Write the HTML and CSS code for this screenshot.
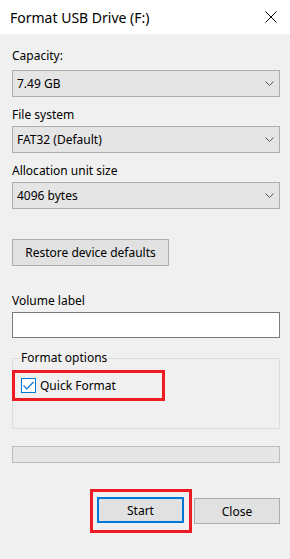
FILE: index.html
```html
<!DOCTYPE html>
<html lang="en">
<head>
    <meta charset="UTF-8">
    <meta name="viewport" content="width=device-width, initial-scale=1.0">
    <title>Format USB Drive (F:)</title>
    <link rel="stylesheet" href="styles.css">
</head>
<body>

    <!-- Title bar -->
    <header class="titlebar">
        <span class="title">Format USB Drive (F:)</span>
        <svg class="close-icon" width="12" height="12" viewBox="0 0 12 12">
            <path d="M0.5 0.5 L11.5 11.5 M11.5 0.5 L0.5 11.5" stroke="#000" stroke-width="1" fill="none"/>
        </svg>
    </header>

    <!-- Dialog body -->
    <main class="dialog">
        <label class="field-label first">Capacity:</label>
        <div class="select first-select">
            <span>7.49 GB</span>
            <svg class="chevron" width="9" height="5" viewBox="0 0 9 5"><path d="M0.5 0.5 L4.5 4.5 L8.5 0.5" stroke="#555" fill="none"/></svg>
        </div>

        <label class="field-label">File system</label>
        <div class="select">
            <span>FAT32 (Default)</span>
            <svg class="chevron" width="9" height="5" viewBox="0 0 9 5"><path d="M0.5 0.5 L4.5 4.5 L8.5 0.5" stroke="#555" fill="none"/></svg>
        </div>

        <label class="field-label">Allocation unit size</label>
        <div class="select">
            <span>4096 bytes</span>
            <svg class="chevron" width="9" height="5" viewBox="0 0 9 5"><path d="M0.5 0.5 L4.5 4.5 L8.5 0.5" stroke="#555" fill="none"/></svg>
        </div>

        <button class="button restore-btn">Restore device defaults</button>

        <label class="field-label volume">Volume label</label>
        <div class="textbox"></div>

        <!-- Format options -->
        <fieldset class="group">
            <legend>Format options</legend>
            <div class="highlight quick-format">
                <span class="checkbox">
                    <svg width="11" height="9" viewBox="0 0 11 9"><path d="M0.5 4.5 L3.8 7.8 L10.5 1" stroke="#0a6fd1" stroke-width="1.2" fill="none"/></svg>
                </span>
                <span>Quick Format</span>
            </div>
        </fieldset>

        <div class="progress"></div>

        <div class="actions">
            <div class="highlight start-wrap">
                <button class="button start-btn">Start</button>
            </div>
            <button class="button">Close</button>
        </div>
    </main>

</body>
</html>
```

FILE: styles.css
```css
/* Windows dialog look */
body {
    margin: 0;
    width: 290px;
    height: 559px;
    background-color: #f0f0f0;
    color: #000;
    font-family: "Noto Sans", Arial, sans-serif;
    font-size: 12px;
    overflow: hidden;
}

/* Title bar */
.titlebar {
    height: 34px;
    background-color: #fff;
    display: flex;
    align-items: center;
    justify-content: space-between;
    padding: 0 13px 0 10px;
}

.title {
    font-size: 14px;
    color: #000;
}

.close-icon {
    display: block;
}

/* Main area */
.dialog {
    padding: 0 10px 0 12px;
    display: flex;
    flex-direction: column;
}

.field-label {
    display: block;
    line-height: 16px;
    margin-top: 10px;
    margin-bottom: 3px;
}

.field-label.first {
    margin-top: 14px;
    margin-bottom: 6px;
}

.field-label.volume {
    margin-top: 27px;
}

.select {
    height: 27px;
    box-sizing: border-box;
    background-color: #e5e5e5;
    border: 1px solid #adadad;
    display: flex;
    align-items: center;
    justify-content: space-between;
    padding: 0 5px 0 4px;
}

.chevron {
    display: block;
}

/* Buttons */
.button {
    font-family: inherit;
    font-size: 12px;
    color: #000;
    background-color: #e1e1e1;
    border: 1px solid #adadad;
    height: 26px;
    padding: 0;
    box-sizing: border-box;
    cursor: pointer;
}

.restore-btn {
    align-self: flex-start;
    width: 157px;
    height: 27px;
    margin-top: 30px;
}

.textbox {
    height: 26px;
    box-sizing: border-box;
    background-color: #fff;
    border: 1px solid #7a7a7a;
}

/* Format options group */
.group {
    margin: 12px 0 0;
    padding: 0 0 27px 6px;
    border: 1px solid #dcdcdc;
}

.group legend {
    padding: 0 2px;
    line-height: 16px;
}

.highlight {
    border: 3px solid #ed1c24;
    box-sizing: border-box;
}

.quick-format {
    margin: 4px 0 0 -7px;
    width: 153px;
    height: 31px;
    display: flex;
    align-items: center;
    gap: 4px;
    padding-left: 6px;
}

.checkbox {
    width: 15px;
    height: 15px;
    box-sizing: border-box;
    border: 1px solid #0078d7;
    background-color: #fff;
    display: flex;
    align-items: center;
    justify-content: center;
}

.checkbox svg {
    display: block;
}

/* Progress bar */
.progress {
    margin-top: 17px;
    height: 17px;
    box-sizing: border-box;
    background-color: #e6e6e6;
    border: 1px solid #bcbcbc;
}

/* Bottom buttons */
.actions {
    margin-top: 26px;
    display: flex;
    justify-content: flex-end;
    align-items: center;
    gap: 2px;
}

.start-wrap {
    padding: 5px 5px 7px 4px;
}

.start-btn {
    width: 87px;
    border: 2px solid #0078d7;
}

.actions > .button {
    width: 86px;
}
```
